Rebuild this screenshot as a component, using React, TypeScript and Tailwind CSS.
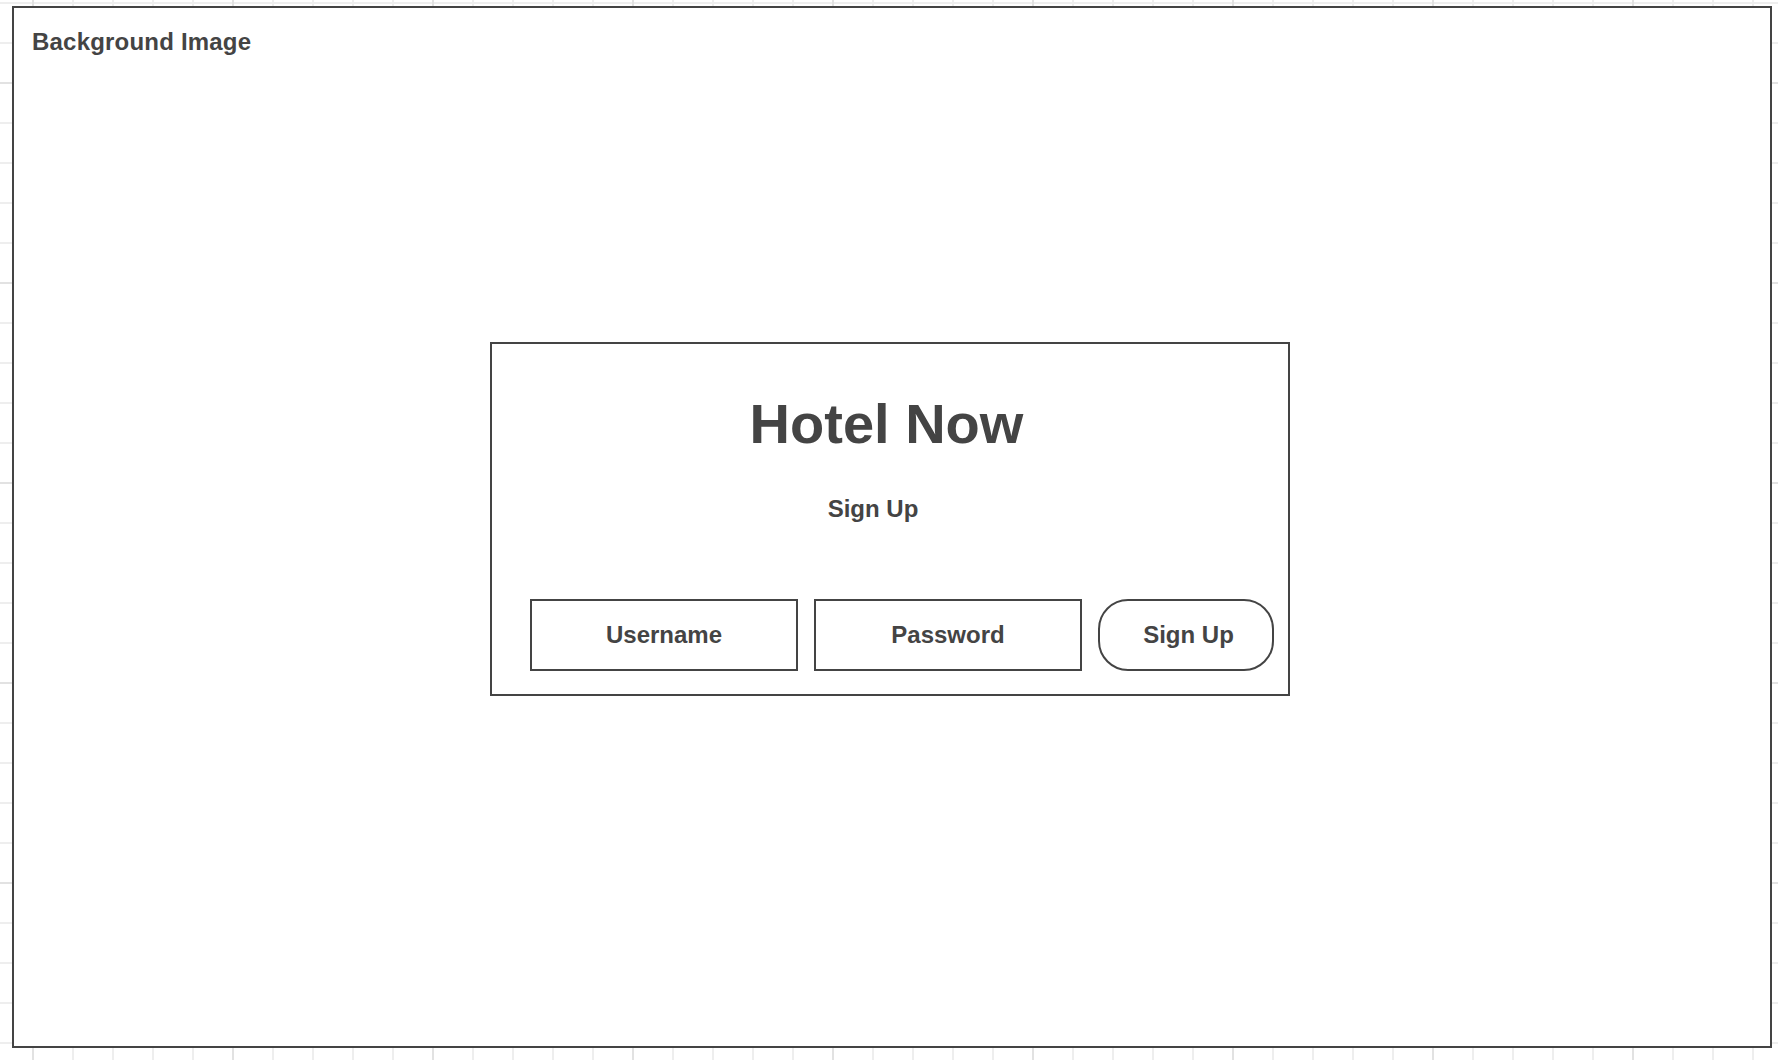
import React from "react";

export default function App() {
  return (
    <div
      className="w-[1778px] h-[1060px] overflow-hidden pl-[12px] pt-[6px] bg-white bg-[image:linear-gradient(to_right,#e2e2e2_2px,transparent_2px),linear-gradient(to_bottom,#e2e2e2_2px,transparent_2px),linear-gradient(to_right,#eeeeee_2px,transparent_2px),linear-gradient(to_bottom,#eeeeee_2px,transparent_2px)] bg-[size:200px_200px,200px_200px,40px_40px,40px_40px] bg-[position:32px_82px]"
      style={{ fontFamily: '"Liberation Sans", Arial, Helvetica, sans-serif' }}
    >
      <div className="w-[1760px] h-[1042px] border-2 border-[#444444] bg-white text-[#444444]">
        <div className="pl-[18px] pt-[22px] text-[24px] leading-none font-bold tracking-[0.2px]">
          Background Image
        </div>
        <div className="ml-[476px] mt-[288px] w-[800px] h-[354px] border-2 border-[#444444] flex flex-col">
          <div className="pt-[52px] pr-[7px] text-center text-[56px] leading-none font-bold">
            Hotel Now
          </div>
          <div className="mt-[45px] pr-[34px] text-center text-[24px] leading-none font-bold">
            Sign Up
          </div>
          <div className="mt-[78px] pl-[38px] flex gap-[16px]">
            <div className="w-[268px] h-[72px] border-2 border-[#444444] flex items-center justify-center text-[24px] leading-none font-bold">
              Username
            </div>
            <div className="w-[268px] h-[72px] border-2 border-[#444444] flex items-center justify-center text-[24px] leading-none font-bold">
              Password
            </div>
            <div className="w-[176px] h-[72px] border-2 border-[#444444] rounded-[30px] flex items-center justify-center pl-[5px] text-[24px] leading-none font-bold">
              Sign Up
            </div>
          </div>
        </div>
      </div>
    </div>
  );
}
